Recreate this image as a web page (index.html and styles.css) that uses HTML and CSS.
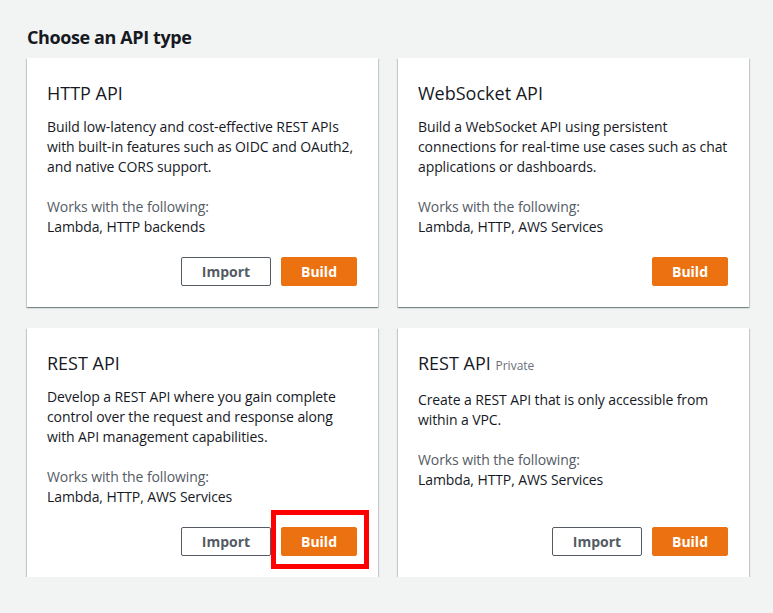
FILE: index.html
```html
<!DOCTYPE html>
<html>
<head>
<meta charset="utf-8">
<link rel="stylesheet" href="styles.css">
</head>
<body>
<div class="page">
  <h1 class="page-title">Choose an API type</h1>
  <div class="grid">
    <div class="card">
      <h2 class="card-title">HTTP API</h2>
      <p class="desc">Build low-latency and cost-effective REST APIs with built-in features such as OIDC and OAuth2, and native CORS support.</p>
      <div class="works">
        <div class="works-label">Works with the following:</div>
        <div class="works-value">Lambda, HTTP backends</div>
      </div>
      <div class="actions">
        <button class="btn btn-normal">Import</button>
        <button class="btn btn-primary">Build</button>
      </div>
    </div>
    <div class="card">
      <h2 class="card-title">WebSocket API</h2>
      <p class="desc">Build a WebSocket API using persistent connections for real-time use cases such as chat applications or dashboards.</p>
      <div class="works">
        <div class="works-label">Works with the following:</div>
        <div class="works-value">Lambda, HTTP, AWS Services</div>
      </div>
      <div class="actions">
        <button class="btn btn-primary">Build</button>
      </div>
    </div>
    <div class="card">
      <h2 class="card-title">REST API</h2>
      <p class="desc">Develop a REST API where you gain complete control over the request and response along with API management capabilities.</p>
      <div class="works">
        <div class="works-label">Works with the following:</div>
        <div class="works-value">Lambda, HTTP, AWS Services</div>
      </div>
      <div class="actions">
        <button class="btn btn-normal">Import</button>
        <span class="highlight-wrap">
          <button class="btn btn-primary">Build</button>
          <span class="highlight"></span>
        </span>
      </div>
    </div>
    <div class="card">
      <h2 class="card-title card-title-tagged">REST API <span class="tag">Private</span></h2>
      <p class="desc">Create a REST API that is only accessible from within a VPC.</p>
      <div class="works">
        <div class="works-label">Works with the following:</div>
        <div class="works-value">Lambda, HTTP, AWS Services</div>
      </div>
      <div class="actions">
        <button class="btn btn-normal">Import</button>
        <button class="btn btn-primary">Build</button>
      </div>
    </div>
  </div>
</div>
</body>
</html>
```
FILE: styles.css
```css
html, body {
  margin: 0;
  padding: 0;
  background: #f2f3f3;
}
body {
  font-family: "Open Sans", "Noto Sans", Arial, sans-serif;
  color: #16191f;
  font-size: 14px;
  line-height: 20px;
  letter-spacing: -0.1px;
}
.page {
  padding: 26px 24px 0 27px;
}
.page-title {
  margin: 0 0 10px 0;
  font-size: 18px;
  line-height: 22px;
  font-weight: 700;
  color: #16191f;
  letter-spacing: -0.4px;
}
.grid {
  display: grid;
  grid-template-columns: 351px 351px;
  column-gap: 20px;
  row-gap: 21px;
}
.card {
  background: #ffffff;
  box-shadow: 0 1px 1px 0 rgba(0, 28, 36, 0.3), 1px 1px 1px 0 rgba(0, 28, 36, 0.15), -1px 1px 1px 0 rgba(0, 28, 36, 0.15);
  padding: 20px 21px 21px 20px;
  height: 249px;
  box-sizing: border-box;
  display: flex;
  flex-direction: column;
}
.card-title {
  margin: 0 0 9px 0;
  font-size: 18px;
  line-height: 30px;
  font-weight: 400;
  color: #16191f;
  letter-spacing: 0;
}
.card-title-tagged {
  margin-bottom: 12px;
}
.tag {
  font-size: 12px;
  line-height: 16px;
  color: #687078;
}
.desc {
  margin: 0 0 20px 0;
}
.works-label {
  color: #545b64;
}
.actions {
  margin-top: auto;
  display: flex;
  justify-content: flex-end;
  gap: 10px;
}
.btn {
  font-family: inherit;
  font-size: 14px;
  font-weight: 700;
  height: 29px;
  line-height: 20px;
  border-radius: 2px;
  padding: 3px 0;
  box-sizing: border-box;
  cursor: pointer;
}
.btn-normal {
  width: 90px;
  background: #ffffff;
  border: 1px solid #545b64;
  color: #545b64;
}
.btn-primary {
  width: 76px;
  background: #ec7211;
  border: 1px solid #ec7211;
  color: #ffffff;
}
.highlight-wrap {
  position: relative;
  display: inline-flex;
}
.highlight {
  position: absolute;
  left: -10px;
  top: -17px;
  right: -12px;
  bottom: -13px;
  border: 5px solid #ff0000;
  pointer-events: none;
}
```
